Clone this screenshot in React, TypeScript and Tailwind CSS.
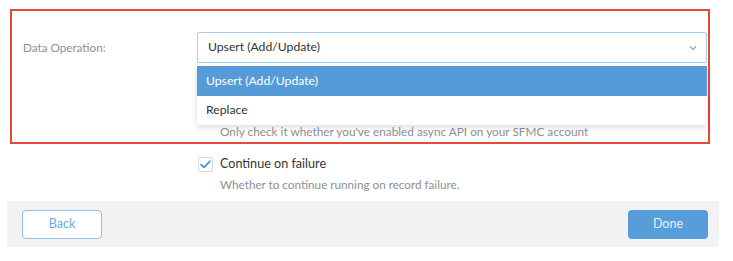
import React from "react";

export default function App() {
  return (
    <div className="w-[733px] h-[261px] bg-white relative overflow-hidden" style={{ fontFamily: "Lato, 'Noto Sans', sans-serif" }}>
      <div className="pt-[9px] pl-[10px]">
        <div className="w-[700px] h-[135px] border-2 border-[#e2493b] relative">
          <div className="pt-[21px] pl-[11px] pr-[1px]">
            <div className="flex items-center">
              <div className="w-[174px] text-[11.7px] text-[#8b9099]">Data Operation:</div>
              <div className="flex-1 relative">
                <div className="h-[31px] border border-[#a5cef0] rounded-[2px] flex items-center justify-between pl-[10px] pr-[9px]">
                  <span className="text-[12.2px] text-[#333]">Upsert (Add/Update)</span>
                  <svg width="8" height="6" viewBox="0 0 8 6" fill="none">
                    <path d="M1 1.5 L4 4.5 L7 1.5" stroke="#9aa0a8" strokeWidth="1.2" />
                  </svg>
                </div>
                <div className="absolute left-0 right-0 top-full mt-[3px] z-10 bg-white shadow-[0_2px_6px_rgba(0,0,0,0.15)]">
                  <div className="h-[30px] bg-[#559bd8] text-white text-[12.2px] flex items-center pl-[9px]">Upsert (Add/Update)</div>
                  <div className="h-[29px] text-[#333] text-[12.2px] flex items-center pl-[9px]">Replace</div>
                </div>
              </div>
            </div>
            <div className="pl-[197px] mt-[62px] text-[11.8px] text-[#8b8f96] leading-[14px]">
              Only check it whether you've enabled async API on your SFMC account
            </div>
          </div>
        </div>
      </div>
      <div className="pl-[198px] mt-[12px]">
        <div className="flex items-center gap-[7px] h-[16px]">
          <div className="w-[15px] h-[15px] border border-[#d8d8d8] rounded-[2px] flex items-center justify-center bg-white">
            <svg width="11" height="9" viewBox="0 0 11 9" fill="none">
              <path d="M1.2 4.6 L4 7.3 L9.8 1.3" stroke="#4a93d8" strokeWidth="1.8" strokeLinecap="round" strokeLinejoin="round" />
            </svg>
          </div>
          <span className="text-[12.6px] text-[#333]">Continue on failure</span>
        </div>
        <div className="pl-[22px] text-[11.7px] text-[#8b8f96] mt-[4px] leading-[16px]">
          Whether to continue running on record failure.
        </div>
      </div>
      <div className="ml-[7px] mt-[9px] w-[712px] h-[46px] bg-[#f2f2f2] rounded-b-[3px] flex items-center justify-between pl-[15px] pr-[11px]">
        <button className="w-[80px] h-[29px] border border-[#8fc1eb] rounded-[4px] bg-white text-[12.5px] text-[#68a9e0]">Back</button>
        <button className="w-[80px] h-[29px] rounded-[4px] bg-[#569dda] text-[12.5px] text-[#e8f1fa]">Done</button>
      </div>
    </div>
  );
}
